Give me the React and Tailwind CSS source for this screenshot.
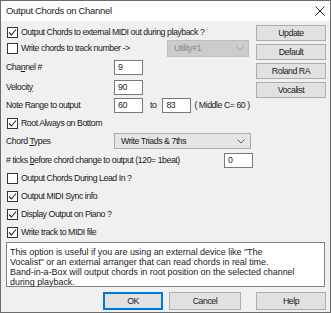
import React from 'react';

const Check = ({ checked }) => (
  <span className="w-[11px] h-[11px] border border-[#333333] bg-white flex items-center justify-center shrink-0">
    {checked && (
      <svg width="9" height="9" viewBox="0 0 9 9">
        <path d="M1 4.5 L3.5 7 L8 1.5" fill="none" stroke="#222222" strokeWidth="1.1" />
      </svg>
    )}
  </span>
);

const CheckRow = ({ checked, label, className = '' }) => (
  <div className={`h-[16px] flex items-center gap-[3px] pl-[6px] whitespace-nowrap ${className}`}>
    <Check checked={checked} />
    <span>{label}</span>
  </div>
);

const Field = ({ value, className = '' }) => (
  <div className={`h-[15px] w-[29px] bg-white border border-[#7a7a7a] flex items-center px-[3px] ${className}`}>
    {value}
  </div>
);

const Chevron = ({ color = '#606060' }) => (
  <svg width="8" height="5" viewBox="0 0 8 5">
    <path d="M0.5 0.5 L4 4 L7.5 0.5" fill="none" stroke={color} strokeWidth="1" />
  </svg>
);

const Btn = ({ label, primary, className = '' }) => (
  <div
    className={`h-[16px] flex items-center justify-center bg-[#e1e1e1] border ${
      primary ? 'border-[#0078d7] shadow-[inset_0_0_0_1px_#0078d7]' : 'border-[#adadad]'
    } ${className}`}
  >
    {label}
  </div>
);

export default function App() {
  return (
    <div className="w-[331px] h-[313px] bg-[#f0f0f0] border border-[#6b6b6b] flex flex-col text-[8.75px] tracking-[-0.45px] leading-none text-[#1a1a1a] font-['Liberation_Sans',Arial,sans-serif] overflow-hidden">
      {/* Title bar */}
      <div className="h-[20px] bg-white flex items-center justify-between pl-[5px] pr-[5px] shrink-0">
        <span className="text-[9.5px] tracking-[-0.3px]">Output Chords on Channel</span>
        <svg width="10" height="10" viewBox="0 0 10 10">
          <path d="M0.5 0.5 L9.5 9.5 M9.5 0.5 L0.5 9.5" stroke="#222222" strokeWidth="1" />
        </svg>
      </div>

      {/* Body */}
      <div className="flex pt-[3px]">
        <div className="flex-1 flex flex-col">
          <CheckRow checked label="Output Chords to external MIDI out during playback ?" />
          <div className="h-[17px] flex items-center">
            <CheckRow label="Write chords to track number ->" className="w-[166px]" />
            <div className="w-[82px] h-[17px] bg-[#cccccc] border border-[#bfbfbf] flex items-center justify-between pl-[6px] pr-[4px] text-[#8a8a8a]">
              <span>Utility#1</span>
              <Chevron color="#a0a0a0" />
            </div>
          </div>

          <div className="h-[16px] mt-[2px] flex items-center pl-[5px]">
            <span className="w-[108px]">
              Cha<span className="underline">n</span>nel #
            </span>
            <Field value="9" />
          </div>
          <div className="h-[16px] mt-[4px] flex items-center pl-[5px]">
            <span className="w-[108px]">
              Velocit<span className="underline">y</span>
            </span>
            <Field value="90" />
          </div>
          <div className="h-[16px] mt-[2px] flex items-center pl-[5px] whitespace-nowrap">
            <span className="w-[108px]">Note Range to output</span>
            <Field value="60" />
            <span className="ml-[7px] mr-[6px]">to</span>
            <Field value="83" className="w-[27px]" />
            <span className="ml-[3px]">( Middle C= 60 )</span>
          </div>

          <CheckRow checked label="Root Always on Bottom" className="mt-[2px]" />

          <div className="h-[16px] mt-[2px] flex items-center pl-[5px]">
            <span className="w-[108px]">
              Chord <span className="underline">T</span>ypes
            </span>
            <div className="w-[137px] h-[16px] bg-[#e5e5e5] border border-[#acacac] flex items-center justify-between pl-[6px] pr-[5px]">
              <span>Write Triads &amp; 7ths</span>
              <Chevron />
            </div>
          </div>

          <div className="h-[16px] mt-[3px] flex items-center pl-[5px] whitespace-nowrap">
            <span className="w-[218px]">
              # ticks <span className="underline">b</span>efore chord change to output (120= 1beat)
            </span>
            <Field value="0" className="w-[27px]" />
          </div>

          <CheckRow label="Output Chords During Lead In ?" className="mt-[2px]" />
          <CheckRow checked label="Output MIDI Sync info" className="mt-[2px]" />
          <CheckRow checked label="Display Output on Piano ?" className="mt-[2px]" />
          <CheckRow checked label="Write track to MIDI file" className="mt-[2px]" />
        </div>

        <div className="w-[70px] mr-[4px] flex flex-col gap-[3px] pt-[1px]">
          <Btn label="Update" />
          <Btn label="Default" />
          <Btn label="Roland RA" />
          <Btn label="Vocalist" />
        </div>
      </div>

      {/* Description */}
      <div className="mx-[5px] mt-[2px] h-[45px] bg-white border border-[#828282] px-[3px] pt-[4px] text-[9px] tracking-[-0.05px] leading-[10px] whitespace-nowrap">
        <p>This option is useful if you are using an external device like "The</p>
        <p>Vocalist" or an external arranger that can read chords in real time.</p>
        <p>Band-in-a-Box will output chords in root position on the selected channel</p>
        <p>during playback.</p>
      </div>

      {/* Footer buttons */}
      <div className="flex justify-end gap-[6px] mt-[5px] mr-[4px]">
        <Btn label="OK" primary className="w-[60px] h-[18px]" />
        <Btn label="Cancel" className="w-[72px] h-[18px]" />
        <Btn label="Help" className="w-[70px] h-[18px] ml-[9px]" />
      </div>
    </div>
  );
}
